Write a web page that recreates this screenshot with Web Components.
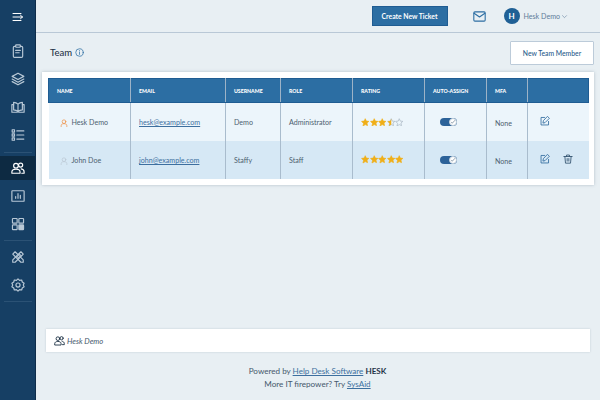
<!DOCTYPE html>
<html lang="en">
<head>
<meta charset="utf-8">
<title>Team</title>
<style>
html, body { margin: 0; height: 100%; }
body { font-family: Lato, "Liberation Sans", sans-serif; background: #e8eff3; overflow: hidden; }
.page { display: flex; width: 600px; height: 400px; }
.main { flex: 1; min-width: 0; display: flex; flex-direction: column; }
</style>
</head>
<body>
<div class="page">
  <hd-sidebar></hd-sidebar>
  <div class="main">
    <hd-topbar></hd-topbar>
    <hd-title></hd-title>
    <hd-team-table></hd-team-table>
    <hd-footer></hd-footer>
  </div>
</div>

<script>
const svg = (body, size, extra) =>
  `<svg xmlns="http://www.w3.org/2000/svg" width="${size}" height="${size}" viewBox="0 0 24 24" fill="none" stroke="currentColor" stroke-width="2" stroke-linecap="round" stroke-linejoin="round" ${extra || ""}>${body}</svg>`;

const ICONS = {
  menu: '<path d="M2 5h16M2 12h19M2 19h16M17 8.500l4 3.500-4 3.500"/>',
  clipboard: '<path d="M8 4H6a2 2 0 0 0-2 2v15a2 2 0 0 0 2 2h12a2 2 0 0 0 2-2V6a2 2 0 0 0-2-2h-2"/><rect x="8" y="1.500" width="8" height="4" rx="1"/><path d="M8 11h8M8 15h6"/>',
  layers: '<path d="M12 2 2 7.500 12 13l10-5.500z"/><path d="M2 12l10 5.500L22 12"/><path d="M2 16.500 12 22l10-5.500"/>',
  book: '<path d="M12 7c-2-2-4.500-3-7.500-3v13c3 0 5.500 1 7.500 3 2-2 4.500-3 7.500-3V4c-3 0-5.500 1-7.500 3zM12 7v13"/><path d="M4.500 8H1.500v13H10l2-1 2 1h8.500V8h-3"/>',
  list: '<rect x="2" y="3" width="4" height="4"/><rect x="2" y="10" width="4" height="4"/><rect x="2" y="17" width="4" height="4"/><path d="M10 5h12M10 12h12M10 19h12"/>',
  users: '<circle cx="8.500" cy="8" r="4"/><path d="M1.500 21v-2c0-3 3-5 7-5s7 2 7 5v2z"/><circle cx="16.500" cy="7" r="3.500"/><path d="M17.500 13.500c2.800.4 5 2.500 5 5.500v2h-4"/>',
  chart: '<rect x="1.500" y="3" width="21" height="18" rx="1"/><path d="M8 16v-3M12 16V8M16 16v-5"/>',
  grid: '<rect x="2.500" y="2.500" width="8" height="8" rx="1"/><rect x="13.500" y="2.500" width="8" height="8" rx="1"/><rect x="2.500" y="13.500" width="8" height="8" rx="1"/><rect x="13.500" y="13.500" width="8" height="8" rx="1" fill="currentColor"/>',
  tools: '<path d="M3 7l4-4 14 14v4h-4z"/><path d="M21 7l-4-4L3 17v4h4z"/><path d="M14 6.500l3.500 3.500M10 10.500l3.500 3.500"/>',
  gear: '<circle cx="12" cy="12" r="3.500"/><path d="M12 1.500l2.700 2.600 3.600-.7 1 3.500 3.200 2-1.500 3.100 1.500 3.100-3.200 2-1 3.500-3.600-.7L12 22.500l-2.700-2.600-3.600.7-1-3.500-3.200-2L3 12 1.500 8.900l3.200-2 1-3.500 3.600.7z"/>',
  mail: '<rect x="1.500" y="3.500" width="21" height="17" rx="2"/><path d="M2 6l10 7 10-7"/>',
  info: '<circle cx="12" cy="12" r="10"/><path d="M12 11v6M12 7v.5"/>',
  user: '<circle cx="12" cy="8" r="5.500"/><path d="M3.500 23v-3c0-4 3-6 8.500-6s8.500 2 8.500 6v3"/>',
  edit: '<path d="M11 3.500H2.500v18h18V13"/><path d="M18.500 1.500l4 4L12 16l-5 1 1-5z"/>',
  trash: '<path d="M2 6h20M8.500 6V2.500h7V6M4.500 6l1.500 16h12l1.500-16"/><path d="M10 11v6M14 11v6"/>',
};

class HdSidebar extends HTMLElement {
  connectedCallback() {
    const item = (name, cls) =>
      `<a class="${cls || ""}">${svg(ICONS[name], 14, 'stroke-width="2.200"')}</a>`;
    this.attachShadow({ mode: "open" }).innerHTML = `
    <style>
      :host { display: flex; flex-direction: column; width: 36px; flex: none; height: 400px; box-sizing: border-box;
        background: #163f64; border-right: 1px solid #0e2c4a; color: #b8c8d6; }
      .top { height: 33px; display: flex; align-items: center; justify-content: center; color: #fff; }
      nav { display: flex; flex-direction: column; padding-top: 4px; }
      a { height: 28px; display: flex; align-items: center; justify-content: center; }
      a.active { height: 24px; background: #0d2a42; color: #fff; }
      hr { width: 28px; border: 0; border-top: 1px solid #2b5275; margin: 0 auto; height: 0; }
    </style>
    <div class="top">${svg(ICONS.menu, 12, 'stroke-width="2.500" stroke-linecap="butt"')}</div>
    <nav>
      ${item("clipboard")}${item("layers")}${item("book")}${item("list")}
      <hr style="margin-top:3px;margin-bottom:3px">
      ${item("users", "active")}
      <div style="height:2px"></div>
      ${item("chart")}${item("grid")}
      <hr style="margin-top:2px">
      <div style="height:2px"></div>
      ${item("tools")}${item("gear")}
      <hr style="margin-top:2px">
    </nav>`;
  }
}

class HdTopbar extends HTMLElement {
  connectedCallback() {
    this.attachShadow({ mode: "open" }).innerHTML = `
    <style>
      :host { display: flex; align-items: center; height: 32px; flex: none; box-sizing: content-box;
        border-bottom: 1px solid #b9c8d6; padding-right: 32px; justify-content: flex-end; }
      .create { width: 76px; height: 20px; box-sizing: border-box; display: flex; align-items: center; justify-content: center;
        background: #2c6ea3; border: 1px solid #1f5c92; color: #fff; font-size: 6.800px; font-weight: 700; white-space: nowrap; }
      .mail { display: flex; color: #2c6ea3; margin-left: 25px; }
      .av { width: 16px; height: 16px; border-radius: 50%; background: #1f6095; color: #fff; font-size: 8px; font-weight: 700;
        display: flex; align-items: center; justify-content: center; margin-left: 18px; }
      .name { margin-left: 4px; font-size: 7.100px; color: #5f7c9a; white-space: nowrap; }
      .chev { margin-left: 1px; display: flex; color: #5f7c9a; }
    </style>
    <div class="create">Create New Ticket</div>
    <div class="mail">${svg(ICONS.mail, 13, 'stroke-width="1.800"')}</div>
    <div class="av">H</div>
    <div class="name">Hesk Demo</div>
    <div class="chev">${svg('<path d="M5 9l7 7 7-7"/>', 7, 'stroke-width="3"')}</div>`;
  }
}

class HdTitle extends HTMLElement {
  connectedCallback() {
    this.attachShadow({ mode: "open" }).innerHTML = `
    <style>
      :host { display: flex; justify-content: space-between; flex: none;
        height: 24px; margin: 8px 6px 0 14px; }
      h1 { display: flex; align-items: center; gap: 3px; margin: 0 0 1px; font-size: 9.500px; font-weight: 500; color: #1f3347; }
      h1 span { display: flex; color: #2c6ea3; }
      button { width: 84px; height: 24px; box-sizing: border-box; background: #fff; border: 1px solid #bccbd9; border-radius: 1px;
        color: #2a5c8c; font: 500 6.800px Lato, sans-serif; padding: 0; }
    </style>
    <h1>Team <span>${svg(ICONS.info, 9, 'stroke-width="2"')}</span></h1>
    <button>New Team Member</button>`;
  }
}

class HdRating extends HTMLElement {
  connectedCallback() {
    const value = parseFloat(this.getAttribute("value"));
    const star = "M12 2l3 6.800 7.200.7-5.400 4.800 1.600 7.200L12 18.700 5.600 22.500l1.600-7.200L1.800 9.500 9 8.800z";
    let out = "";
    for (let i = 1; i <= 5; i++) {
      const full = value >= i, half = !full && value > i - 1;
      out += `<svg width="8.500" height="8.500" viewBox="0 0 24 24">
        <path d="${star}" fill="${full ? "#f0af19" : "none"}" stroke="${full ? "#f0af19" : "#a9b6c2"}" stroke-width="2"/>
        ${half ? `<path d="M12 2v16.700L5.600 22.500l1.600-7.200L1.800 9.500 9 8.800z" fill="#f0af19"/>` : ""}
      </svg>`;
    }
    this.attachShadow({ mode: "open" }).innerHTML = `
    <style>:host { display: inline-flex; gap: 0; } svg { display: block; }</style>${out}`;
  }
}

class HdToggle extends HTMLElement {
  connectedCallback() {
    this.attachShadow({ mode: "open" }).innerHTML = `
    <style>
      :host { display: block; width: 17px; height: 8px; border-radius: 4px; background: #2c6299; position: relative; }
      i { position: absolute; right: 0; top: 0; width: 8px; height: 8px; box-sizing: border-box; border-radius: 50%;
        background: #fff; border: 1px solid #c2d0dc; display: flex; align-items: center; justify-content: center; color: #2c4a66; }
    </style>
    <i>${svg('<path d="M6 13l3 4L19 6"/>', 6, 'stroke-width="3"')}</i>`;
  }
}

class HdTeamTable extends HTMLElement {
  connectedCallback() {
    const row = (u) => `
      <tr class="${u.cls}">
        <td><div class="who"><span class="${u.admin ? "admin" : "staff"}">${svg(ICONS.user, 8)}</span>${u.name}</div></td>
        <td><a>${u.email}</a></td>
        <td>${u.username}</td>
        <td>${u.role}</td>
        <td><hd-rating value="${u.rating}"></hd-rating></td>
        <td><div class="tg"><hd-toggle></hd-toggle></div></td>
        <td class="mfa">None</td>
        <td><div class="acts"><span>${svg(ICONS.edit, 10)}</span>${u.del ? `<span class="del">${svg(ICONS.trash, 10)}</span>` : ""}</div></td>
      </tr>`;
    this.attachShadow({ mode: "open" }).innerHTML = `
    <style>
      :host { display: block; flex: none; background: #fff; margin: 7px 6px 0 6px; padding: 6px 6px 6px 6px;
        box-shadow: 0 0 3px rgba(80,100,120,.35); }
      table { border-collapse: collapse; table-layout: fixed; width: 540px; font-size: 7.100px; color: #4d5f70; }
      th { background: #2c6ea3; color: #fff; font-size: 5.200px; font-weight: 900; text-transform: uppercase; text-align: left;
        height: 24px; padding: 0 0 0 8px; box-sizing: border-box; border-top: 1px solid #1f5c92; border-bottom: 1px solid #1f5c92;
        border-right: 1px solid #9db3c7; white-space: nowrap; }
      th:first-child { border-left: 1px solid #1f5c92; }
      th:last-child { border-right: 1px solid #1f5c92; }
      td { padding: 2px 0 0 8px; height: 38px; box-sizing: border-box; border-right: 1px solid #a9bccd; white-space: nowrap; }
      td:last-child { border-right: 0; }
      tr.a td { background: #ecf5fb; }
      tr.b td { background: #d6e8f5; }
      a { color: #3d6f9f; text-decoration: underline; }
      .who { display: flex; align-items: center; gap: 4px; }
      .who span { display: flex; margin-left: 3px; }
      .admin { color: #ee8a3a; }
      .staff { color: #b9c6d2; }
      .tg { padding-left: 7px; margin-top: -2px; }
      .mfa { padding-top: 3px; }
      .acts { display: flex; gap: 13px; color: #2f6a9e; padding-left: 4px; margin-top: -3px; }
      .acts span { display: flex; }
      .acts .del { color: #2f4f6c; }
      hd-rating { vertical-align: middle; margin-top: -3px; }
    </style>
    <table>
      <colgroup><col style="width:82px"><col style="width:95px"><col style="width:55px"><col style="width:72px"><col style="width:72px"><col style="width:62px"><col style="width:41px"><col style="width:61px"></colgroup>
      <thead><tr><th>Name</th><th>Email</th><th>Username</th><th>Role</th><th>Rating</th><th>Auto-assign</th><th>MFA</th><th></th></tr></thead>
      <tbody>
        ${row({ cls: "a", admin: true, name: "Hesk Demo", email: "hesk@example.com", username: "Demo", role: "Administrator", rating: 3.5 })}
        ${row({ cls: "b", name: "John Doe", email: "john@example.com", username: "Staffy", role: "Staff", rating: 5, del: true })}
      </tbody>
    </table>`;
  }
}

class HdFooter extends HTMLElement {
  connectedCallback() {
    this.attachShadow({ mode: "open" }).innerHTML = `
    <style>
      :host { display: flex; flex-direction: column; flex: 1; justify-content: flex-end; }
      .bar { background: #fff; height: 23px; margin: 0 10px; display: flex; align-items: center; gap: 2px; padding-left: 8px;
        font-size: 7.600px; font-style: italic; color: #44566a; box-shadow: 0 0 2px rgba(80,100,120,.25); }
      .bar span { display: flex; color: #1f3347; }
      .txt { height: 48px; box-sizing: border-box; padding-top: 13px; text-align: center; font-size: 8.100px; line-height: 13px; color: #45586b; margin-left: -1px; }
      a { color: #3d6f9f; text-decoration: underline; }
      b { color: #1f3347; font-weight: 700; }
    </style>
    <div class="bar"><span>${svg(ICONS.users, 11)}</span>Hesk Demo</div>
    <div class="txt">Powered by <a>Help Desk Software</a> <b>HESK</b><br>More IT firepower? Try <a>SysAid</a></div>`;
  }
}

customElements.define("hd-sidebar", HdSidebar);
customElements.define("hd-topbar", HdTopbar);
customElements.define("hd-title", HdTitle);
customElements.define("hd-rating", HdRating);
customElements.define("hd-toggle", HdToggle);
customElements.define("hd-team-table", HdTeamTable);
customElements.define("hd-footer", HdFooter);
</script>
</body>
</html>
